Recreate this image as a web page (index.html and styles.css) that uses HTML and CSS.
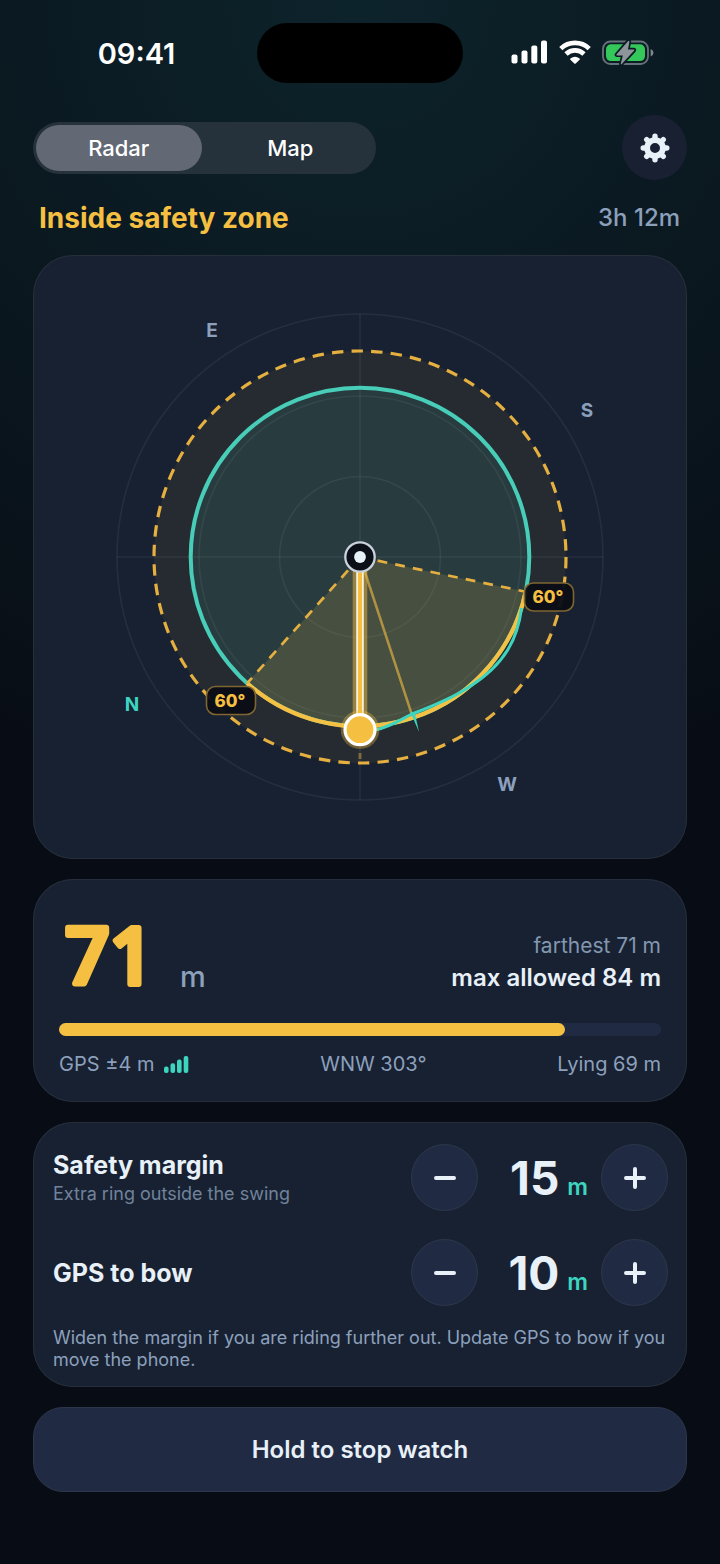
FILE: index.html
```html
<!DOCTYPE html>
<html lang="en">
<head>
<meta charset="utf-8">
<meta name="viewport" content="width=device-width, initial-scale=1">
<title>Anchor watch</title>
<link rel="stylesheet" href="styles.css">
</head>
<body>
<header class="status">
  <time class="status-time">09:41</time>
  <div class="island"></div>
  <div class="status-icons">
    <svg width="37" height="24" viewBox="0 0 37 24" fill="#fff" aria-label="Signal">
      <rect x="0.5" y="14.5" width="6" height="9" rx="2"/><rect x="10.5" y="10.5" width="6" height="13" rx="2"/><rect x="20.3" y="5.5" width="6" height="18" rx="2"/><rect x="30" y="0.5" width="6" height="23" rx="2"/>
    </svg>
    <svg width="32" height="24" viewBox="0 0 32 24" aria-label="Wi-Fi">
      <g fill="none" stroke="#fff" stroke-width="4.6"><path d="M1.8 8.6a20.4 20.4 0 0 1 28.4 0"/><path d="M7 14a12.900 12.900 0 0 1 18 0"/></g>
      <path fill="#fff" d="M11.400 18.600q4.600-3.600 9.200 0q.6.5 0 1.100l-3.900 3.700q-.7.7-1.400 0l-3.900-3.700q-.6-.6 0-1.100z"/>
    </svg>
    <svg width="52" height="26" viewBox="0 0 52 26" aria-label="Battery charging">
      <rect x="1" y="1.500" width="45" height="22.500" rx="7.500" fill="none" stroke="#66727a" stroke-width="1.800"/>
      <rect x="4" y="4.300" width="39" height="16.800" rx="5" fill="#34c759"/>
      <path d="M48.600 9q2.900 1 2.900 3.700t-2.900 3.700z" fill="#7a858c"/>
      <path d="M26 1.200L14.600 14.200q-.8 1.200.6 1.200h5.600L18.800 23.600q-.2 1.600 1 .5l12.400-13.500q.8-1.200-.6-1.200h-5.600L27.400 1.800q.1-1.700-1.400-.6z" fill="#8d949a" stroke="#0b1b23" stroke-width="3.400" paint-order="stroke"/>
    </svg>
  </div>
</header>

<main class="screen">
  <nav class="toolbar">
    <div class="segmented">
      <button class="segment segment-active" aria-pressed="true">Radar</button>
      <button class="segment" aria-pressed="false">Map</button>
    </div>
    <button class="settings" aria-label="Settings">
      <svg width="30" height="30" viewBox="-15 -15 30 30" fill="none" stroke="#e8f0f8">
        <circle r="7.900" stroke-width="5.800"/>
        <path stroke-width="5.400" stroke-linecap="round" d="M0-9V-11.800M0 9V11.800M-9 0H-11.800M9 0H11.800M6.400-6.400L8.300-8.300M-6.400-6.400L-8.300-8.300M6.400 6.400L8.300 8.300M-6.400 6.400L-8.300 8.300"/>
      </svg>
    </button>
  </nav>

  <div class="heading">
    <h1 class="title">Inside safety zone</h1>
    <span class="elapsed">3h 12m</span>
  </div>

  <section class="card" aria-label="Radar">
    <svg class="radar" viewBox="-327 -302 654 604">
      <g fill="none" stroke="#fff" stroke-opacity=".06" stroke-width="1.600">
        <circle r="80.500"/><circle r="161"/><circle r="243"/>
        <path d="M-243 0H243M0-243V243"/>
      </g>
      <circle r="206" fill="#f5bf42" fill-opacity=".065"/>
      <circle r="169.300" fill="#40d0bc" fill-opacity=".105"/>
      <path d="M0 0L165.700 34.700A169.300 169.300 0 0 1-112.800 126.200Z" fill="#f5bf42" fill-opacity=".15"/>
      <circle r="206" fill="none" stroke="#e5b040" stroke-width="3.200" stroke-dasharray="11.450 8.180"/>
      <circle r="169.300" fill="none" stroke="#48ceb8" stroke-width="4"/>
      <path d="M165.700 34.700A169.300 169.300 0 0 1-112.800 126.200" fill="none" stroke="#f5c144" stroke-width="4.200"/>
      <path d="M0 0L165.700 34.700M0 0L-112.800 126.200" stroke="#e5b040" stroke-width="2.700" stroke-dasharray="9.800 8.200"/>
      <path d="M0 0L52 158" stroke="#f5bf42" stroke-opacity=".6" stroke-width="2.500"/>
      <path d="M15 173C30 170 40 163 52 157C73 149 93 141 109 130C146 107 158 80 161.500 51" fill="none" stroke="#3dd5c0" stroke-width="3"/>
      <path d="M50 154L59 175L55 157Z" fill="#3dd5c0"/>
      <path d="M0 196V202" stroke="#f5bf42" stroke-opacity=".4" stroke-width="3"/>
      <path d="M0 0V172" stroke="#f5bf42" stroke-opacity=".45" stroke-width="14.600"/>
      <path d="M0 0V172" stroke="#fff" stroke-width="7.400"/>
      <path d="M0 0V172" stroke="#f5bf42" stroke-width="4.400"/>
      <circle cy="172.700" r="19.300" fill="#f5bf42" fill-opacity=".35"/>
      <circle cy="172.700" r="15" fill="#f5bf42" stroke="#fff" stroke-width="3.200"/>
      <circle r="14.700" fill="#0b1018" stroke="#c9d1dc" stroke-width="2.300"/>
      <circle r="5.900" fill="#e8f0f8"/>
      <g fill="#0a0e16" fill-opacity=".96" stroke="#7f6630" stroke-width="1.600">
        <rect x="164.500" y="26" width="49" height="28" rx="9"/>
        <rect x="-153.500" y="129.500" width="49" height="28" rx="9"/>
      </g>
      <g class="radar-angle"><text x="188" y="46">60°</text><text x="-130" y="150">60°</text></g>
      <g class="radar-compass">
        <text x="-148" y="-220">E</text><text x="227" y="-140">S</text><text x="147" y="234">W</text>
        <text class="radar-north" x="-228" y="154">N</text>
      </g>
    </svg>
  </section>

  <section class="card metrics" aria-label="Distance">
    <div class="metrics-top">
      <div class="distance">
        <svg class="distance-value" width="106" height="110" viewBox="0 0 106 110"><text x="6" y="85">71</text></svg>
        <span class="distance-unit">m</span>
      </div>
      <div class="limits"><span class="farthest">farthest 71 m</span><strong class="allowed">max allowed 84 m</strong></div>
    </div>
    <div class="bar" role="progressbar" aria-label="Distance used" aria-valuemin="0" aria-valuemax="84" aria-valuenow="71"><div class="bar-fill" style="width:84%"></div></div>
    <div class="facts">
      <span class="gps">GPS ±4 m
        <svg width="25" height="17" viewBox="0 0 25 17" fill="#3dd5c0" aria-hidden="true"><rect x="0" y="10.500" width="4.600" height="6.500" rx="2"/><rect x="6.500" y="7.300" width="4.600" height="9.700" rx="2"/><rect x="13" y="3.500" width="4.600" height="13.500" rx="2"/><rect x="19.700" y="0" width="4.600" height="17" rx="2"/></svg>
      </span>
      <span>WNW 303°</span>
      <span>Lying 69 m</span>
    </div>
  </section>

  <section class="card controls" aria-label="Adjustments">
    <div class="control">
      <div class="control-text"><h2 class="control-label">Safety margin</h2><p class="control-sub">Extra ring outside the swing</p></div>
      <div class="stepper">
        <button class="step" aria-label="Decrease safety margin"><svg width="22" height="22" viewBox="0 0 22 22"><path d="M2 11H20"/></svg></button>
        <output class="value">15<span class="value-unit">m</span></output>
        <button class="step" aria-label="Increase safety margin"><svg width="22" height="22" viewBox="0 0 22 22"><path d="M2 11H20M11 2V20"/></svg></button>
      </div>
    </div>
    <div class="control">
      <h2 class="control-label">GPS to bow</h2>
      <div class="stepper">
        <button class="step" aria-label="Decrease GPS to bow"><svg width="22" height="22" viewBox="0 0 22 22"><path d="M2 11H20"/></svg></button>
        <output class="value">10<span class="value-unit">m</span></output>
        <button class="step" aria-label="Increase GPS to bow"><svg width="22" height="22" viewBox="0 0 22 22"><path d="M2 11H20M11 2V20"/></svg></button>
      </div>
    </div>
    <p class="hint">Widen the margin if you are riding further out. Update GPS to bow if you move the phone.</p>
  </section>

  <button class="stop">Hold to stop watch</button>
</main>
</body>
</html>
```
FILE: styles.css
```css
* { box-sizing: border-box; }

body {
  margin: 0;
  min-height: 100vh;
  background: #080c14 radial-gradient(circle 860px at 50% 0, #0d232b, #080c14) no-repeat;
  color: #e8f0f8;
  font-family: Inter, "Noto Sans", sans-serif;
}

h1, h2, p { margin: 0; }
svg { display: block; }

button {
  padding: 0;
  border: 0;
  background: none;
  color: inherit;
  font: inherit;
  cursor: pointer;
}

.status {
  display: grid;
  grid-template-columns: 1fr 206px 1fr;
  align-items: center;
  padding-top: 23px;
}
.status-time {
  padding-left: 16px;
  color: #fff;
  font-size: 29px;
  font-weight: 600;
  text-align: center;
}
.island {
  height: 60px;
  border-radius: 30px;
  background: #000;
}
.status-icons {
  display: flex;
  justify-content: center;
  gap: 11px;
  padding-right: 18px;
}

.screen {
  display: flex;
  flex-direction: column;
  gap: 20px;
  padding: 32px 33px 72px;
}

.toolbar {
  display: flex;
  align-items: center;
  justify-content: space-between;
}
.segmented {
  display: grid;
  grid-template-columns: 1fr 1fr;
  gap: 6px;
  width: 343px;
  height: 52px;
  padding: 3px;
  border-radius: 26px;
  background: #25313b;
}
.segment {
  border-radius: 23px;
  color: #fff;
  font-size: 22px;
  font-weight: 500;
}
.segment-active { background: #626874; }
.settings {
  display: grid;
  place-items: center;
  width: 65px;
  height: 65px;
  border-radius: 50%;
  background: #182032;
}

.heading {
  display: flex;
  align-items: center;
  justify-content: space-between;
  min-height: 75px;
  margin: -20px 0;
  padding: 0 7px 0 6px;
}
.title {
  color: #f5bf42;
  font-size: 28px;
  font-weight: 700;
}
.elapsed {
  color: #8ca0bc;
  font-size: 24px;
  font-weight: 500;
}

.card {
  border-radius: 40px;
  background: #182132;
  box-shadow: inset 0 0 0 1px #262e3b;
}
.radar {
  width: 100%;
  height: auto;
}
.radar-angle {
  fill: #f5bf42;
  font-size: 17px;
  font-weight: 800;
  text-anchor: middle;
}
.radar-compass {
  fill: #8ca0bc;
  font-size: 19px;
  font-weight: 700;
  text-anchor: middle;
}
.radar-north { fill: #3dd5c0; }

.metrics { padding: 20px 26px 26px; }
.metrics-top {
  display: flex;
  align-items: flex-end;
  justify-content: space-between;
}
.distance {
  display: flex;
  align-items: flex-end;
  gap: 15px;
}
.distance-value {
  fill: #f5bf42;
  stroke: #f5bf42;
  stroke-width: 6px;
  stroke-linejoin: round;
  font-family: "Noto Sans", "Open Sans", sans-serif;
  font-size: 78px;
  font-weight: 500;
}
.distance-unit {
  padding-bottom: 15px;
  color: #8ca0bc;
  font-size: 29px;
  font-weight: 500;
}
.limits {
  display: flex;
  flex-direction: column;
  align-items: flex-end;
  padding-bottom: 15px;
}
.farthest {
  color: #8297b0;
  font-size: 21px;
  line-height: 32px;
}
.allowed {
  font-size: 24px;
  font-weight: 600;
  line-height: 32px;
}
.bar {
  height: 13px;
  margin-top: 14px;
  border-radius: 7px;
  background: #202b43;
}
.bar-fill {
  height: 100%;
  border-radius: 7px;
  background: #f5bf42;
}
.facts {
  display: flex;
  justify-content: space-between;
  margin-top: 16px;
  color: #8ca0bc;
  font-size: 20px;
  line-height: 24px;
}
.gps {
  display: flex;
  align-items: center;
  gap: 10px;
}

.controls {
  display: grid;
  gap: 28px;
  padding: 22px 19px 16px 20px;
}
.control {
  display: flex;
  align-items: center;
  justify-content: space-between;
}
.control-label {
  font-size: 25px;
  font-weight: 700;
  line-height: 32px;
}
.control-sub {
  color: #70839b;
  font-size: 18px;
  line-height: 26px;
}
.stepper {
  display: flex;
  align-items: center;
}
.step {
  display: grid;
  place-items: center;
  width: 67px;
  height: 67px;
  border: 1px solid #2d374b;
  border-radius: 50%;
  background: #202b43;
}
.step svg {
  fill: none;
  stroke: #e8f0f8;
  stroke-width: 4;
  stroke-linecap: round;
}
.value {
  width: 123px;
  padding-right: 13px;
  font-size: 46px;
  font-weight: 700;
  text-align: right;
}
.value-unit {
  margin-left: 8px;
  color: #3dd5c0;
  font-size: 23px;
  font-weight: 600;
}
.hint {
  margin-top: -7px;
  color: #8ca0bc;
  font-size: 18px;
  line-height: 22px;
}

.stop {
  height: 85px;
  border: 1px solid #2d374b;
  border-radius: 30px;
  background: #202b43;
  font-size: 24px;
  font-weight: 600;
}
```
